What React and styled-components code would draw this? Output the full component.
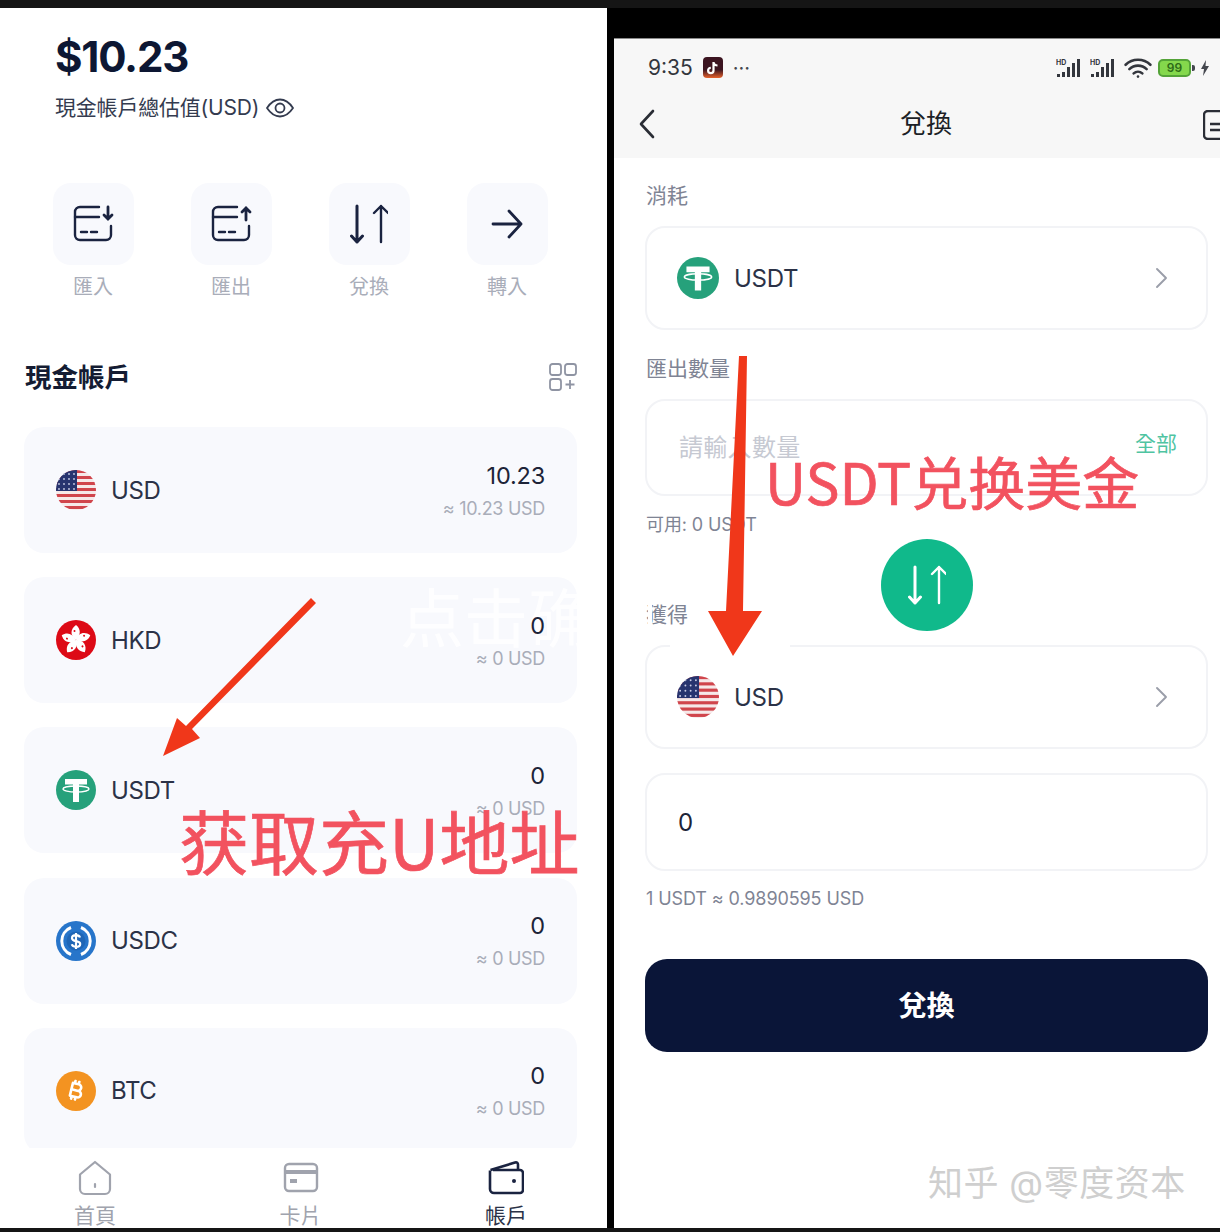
import React from 'react';
import styled, { createGlobalStyle } from 'styled-components';
import { FaBitcoinSign } from 'react-icons/fa6';

const FONT = `Inter, "Noto Sans CJK TC", "Noto Sans", sans-serif`;

const GlobalStyle = createGlobalStyle`
	html, body { margin: 0; padding: 0; background: #111; }
	* { box-sizing: border-box; }
	body { font-family: ${FONT}; }
`;

const Page = styled.div`
	position: relative;
	width: 1220px;
	height: 1232px;
	overflow: hidden;
	background: #000;
	border-top: 8px solid #151515;
	border-bottom: 4px solid #151515;
	display: grid;
	grid-template-columns: 607px 606px;
	column-gap: 7px;
`;

/* ---- left phone ---- */
const AccountPanel = styled.section`
	position: relative;
	background: #fff;
	overflow: hidden;
	display: flex;
	flex-direction: column;
	padding-top: 24px;
`;
const Balance = styled.div`
	padding-left: 55px;
	font-size: 42px;
	line-height: 50px;
	font-weight: 700;
	letter-spacing: -1.2px;
	color: #0d1733;
`;
const BalanceNote = styled.div`
	margin-top: 12px;
	padding-left: 55px;
	display: flex;
	align-items: center;
	gap: 7px;
	font-size: 21px;
	line-height: 28px;
	letter-spacing: -0.2px;
	color: #343b4f;
`;
const Actions = styled.div`
	margin-top: 61px;
	padding-left: 53px;
	display: grid;
	grid-template-columns: repeat(4, 80px);
	column-gap: 58px;
`;
const Action = styled.div`
	display: flex;
	flex-direction: column;
	align-items: center;
	gap: 8px;
`;
const ActionTile = styled.div`
	width: 81px;
	height: 82px;
	border-radius: 18px;
	background: #f8f9fd;
	display: flex;
	align-items: center;
	justify-content: center;
`;
const ActionLabel = styled.div`
	font-size: 20px;
	line-height: 28px;
	color: #a9adb9;
`;
const SectionHead = styled.div`
	margin-top: 61px;
	padding: 0 30px 0 25px;
	height: 30px;
	display: flex;
	align-items: center;
	justify-content: space-between;
`;
const SectionTitle = styled.h2`
	margin: 0;
	font-size: 26.5px;
	line-height: 30px;
	font-weight: 600;
	color: #141c33;
`;
const CardList = styled.div`
	flex: 1;
	min-height: 0;
	overflow: hidden;
	margin-top: 35px;
	padding: 0 30px 0 24px;
	display: flex;
	flex-direction: column;
	gap: 24.2px;
`;
const CurrencyCard = styled.div`
	flex: none;
	height: 126px;
	border-radius: 20px;
	background: #f8f9fd;
	padding: 0 32px;
	display: flex;
	align-items: center;
	justify-content: space-between;
`;
const CurrencyName = styled.div`
	display: flex;
	align-items: center;
	gap: 15px;
	font-size: 24px;
	letter-spacing: -0.4px;
	color: #2b3247;
`;
const CurrencyAmount = styled.div`
	display: flex;
	flex-direction: column;
	align-items: flex-end;
	gap: 5px;
	padding-top: 4px;
`;
const AmountMain = styled.div`
	position: relative;
	z-index: 1;
	font-size: 23.5px;
	line-height: 28px;
	letter-spacing: -0.2px;
	color: #1d2438;
`;
const AmountSub = styled.div`
	font-size: 18px;
	line-height: 28px;
	letter-spacing: -0.3px;
	color: #a9adb9;
`;
const BottomNav = styled.nav`
	flex: none;
	height: 80px;
	background: #fff;
	padding: 12px 60px 0 54px;
	display: grid;
	grid-template-columns: repeat(3, 82px);
	justify-content: space-between;
	overflow: hidden;
`;
const NavItem = styled.div`
	display: flex;
	flex-direction: column;
	align-items: center;
	gap: 6px;
	font-size: 21px;
	line-height: 28px;
	color: ${({ $active }) => ($active ? '#2b3247' : '#a0a3ad')};
`;

/* ---- right phone ---- */
const ExchangePanel = styled.section`
	position: relative;
	margin-top: 30px;
	background: #fff;
	overflow: hidden;
	display: flex;
	flex-direction: column;
	border-top: 1px solid #8a8a8a;
`;
const TopArea = styled.header`
	flex: none;
	background: #f7f7f7;
	height: 119px;
	display: flex;
	flex-direction: column;
`;
const StatusBar = styled.div`
	height: 57px;
	padding: 0 11px 0 34px;
	display: flex;
	align-items: center;
	justify-content: space-between;
`;
const StatusGroup = styled.div`
	display: flex;
	align-items: center;
	gap: ${({ $gap }) => $gap || 8}px;
`;
const Clock = styled.span`
	font-size: 21px;
	color: #33363d;
	margin-right: 2px;
`;
const AppBadge = styled.span`
	width: 20px;
	height: 21px;
	border-radius: 4px;
	background: linear-gradient(#3b1420 60%, #e8622c);
	color: #fff;
	display: flex;
	align-items: center;
	justify-content: center;
`;
const MoreDots = styled.span`
	font-size: 20px;
	line-height: 12px;
	margin-left: 2px;
	color: #44474e;
`;
const BatteryWrap = styled.span`
	display: flex;
	align-items: center;
	gap: 1px;
	&::after {
		content: '';
		width: 3px;
		height: 6px;
		border-radius: 0 2px 2px 0;
		background: #44474e;
	}
`;
const Battery = styled.span`
	width: 33px;
	height: 18px;
	border: 2px solid #54a338;
	border-radius: 5px;
	background: #84d84c;
	font-size: 12px;
	line-height: 14px;
	text-align: center;
	font-weight: 600;
	color: #2e6b17;
`;
const TitleBar = styled.div`
	height: 56px;
	padding-left: 24px;
	display: flex;
	align-items: center;
	position: relative;
`;
const PageTitle = styled.h1`
	position: absolute;
	left: 18px;
	right: 0;
	margin: 0;
	text-align: center;
	font-size: 26px;
	line-height: 36px;
	font-weight: 400;
	color: #1c1f26;
`;
const DocIcon = styled.svg`
	position: absolute;
	left: 589px;
	top: 14px;
`;
const FormBody = styled.div`
	position: relative;
	flex: 1;
	padding: 24px 12px 0 31px;
	display: flex;
	flex-direction: column;
`;
const FieldLabel = styled.div`
	padding-left: 1px;
	font-size: 21px;
	line-height: 28px;
	color: #7f8494;
	margin-top: ${({ $top }) => $top || 0}px;
`;
const FieldBox = styled.div`
	position: relative;
	margin-top: ${({ $top }) => ($top === undefined ? 16 : $top)}px;
	height: ${({ $h }) => $h}px;
	border: 2px solid #f2f3f6;
	border-radius: 20px;
	padding: 0 37px 0 30px;
	display: flex;
	align-items: center;
	justify-content: space-between;
`;
const BoxName = styled.div`
	display: flex;
	align-items: center;
	gap: 15px;
	font-size: 24px;
	letter-spacing: -0.3px;
	color: #2b3247;
`;
const Placeholder = styled.span`
	font-size: 24px;
	letter-spacing: 0.3px;
	color: #c6c9d2;
	margin: 0 0 4px 2px;
`;
const AllLink = styled.span`
	position: absolute;
	right: 29px;
	top: 29px;
	font-size: 21px;
	line-height: 28px;
	color: #4fc4a2;
`;
const Hint = styled.div`
	margin-top: ${({ $top }) => $top}px;
	padding-left: 1px;
	font-size: 18px;
	line-height: 28px;
	letter-spacing: -0.1px;
	color: #7f8494;
`;
const ZeroValue = styled.span`
	font-size: 24px;
	color: #1d2438;
	margin-left: 1px;
`;
const SwapButton = styled.div`
	position: absolute;
	left: 267px;
	top: 381px;
	width: 92px;
	height: 92px;
	border-radius: 50%;
	background: #10b98b;
	display: flex;
	align-items: center;
	justify-content: center;
`;
const SubmitButton = styled.button`
	margin-top: 46px;
	height: 93px;
	border: 0;
	border-radius: 22px;
	padding-bottom: 4px;
	background: #0a1538;
	color: #fff;
	font-family: ${FONT};
	font-size: 28px;
	font-weight: 600;
`;
const Watermark = styled.div`
	position: absolute;
	left: 928px;
	top: 1155px;
	white-space: nowrap;
	font-size: 35px;
	line-height: 40px;
	font-weight: 400;
	color: #cfcfcf;
	letter-spacing: 0.5px;
`;
const LabelPatch = styled.span`
	position: absolute;
	left: 34px;
	top: 444px;
	width: 4px;
	height: 28px;
	background: #fff;
`;
const BorderPatch = styled.span`
	position: absolute;
	left: 56px;
	top: 485px;
	width: 120px;
	height: 4px;
	background: #fff;
`;

/* ---- annotations on top of the screenshots ---- */
const RedNote = styled.div`
	position: absolute;
	left: ${({ $x }) => $x}px;
	top: ${({ $y }) => $y}px;
	font-size: ${({ $size }) => $size}px;
	font-weight: 400;
	-webkit-text-stroke: 0.7px #f2525f;
	line-height: 1.2;
	white-space: nowrap;
	color: #f2525f;
	font-family: "Noto Sans CJK SC", ${FONT};
`;
const GhostNote = styled.div`
	position: absolute;
	left: 400px;
	top: 564px;
	white-space: nowrap;
	font-size: 64px;
	line-height: 84px;
	color: rgba(255, 255, 255, 0.85);
	font-family: "Noto Sans CJK SC", ${FONT};
`;
const ArrowLayer = styled.svg`
	position: absolute;
	left: 0;
	top: -8px;
	pointer-events: none;
`;

/* ---- icons ---- */
const CardArrow = ({ up }) => (
	<svg width="42" height="40" viewBox="0 0 42 40" fill="none" stroke="#1a2340" strokeWidth="2.4" strokeLinecap="round">
		<path d="M27 3H8a5 5 0 0 0-5 5v23a5 5 0 0 0 5 5h26a5 5 0 0 0 5-5v-9" />
		<path d="M3 13h24" />
		<path d="M9 28h6M19 28h6" />
		{up ? <path d="M36 16V4M32 8l4-4 4 4" strokeWidth="2.8" /> : <path d="M36 3v12M32 11l4 4 4-4" strokeWidth="2.8" />}
	</svg>
);

const SwapArrows = ({ color, width = 38, height = 42 }) => (
	<svg width={width} height={height} viewBox="0 0 38 42" fill="none" stroke={color} strokeLinecap="round" strokeLinejoin="round">
		<path d="M7 3v36M1.5 33L7 39l5.5-6" strokeWidth="3" />
		<path d="M31 39V3M24 10l7-7 7 7" strokeWidth="2.4" />
	</svg>
);

const ArrowRight = () => (
	<svg width="34" height="34" viewBox="0 0 34 34" fill="none" stroke="#1a2340" strokeWidth="2.8" strokeLinecap="round" strokeLinejoin="round">
		<path d="M3 17h28M19 4l12 13-12 13" />
	</svg>
);

const AddGrid = () => (
	<svg width="28" height="28" viewBox="0 0 28 28" fill="none" stroke="#8f94a3" strokeWidth="1.8">
		<rect x="1" y="1" width="11" height="11" rx="2.5" />
		<rect x="16" y="1" width="11" height="11" rx="2.5" />
		<rect x="1" y="16" width="11" height="11" rx="2.5" />
		<path d="M21 17v9M16.5 21.5h9" />
	</svg>
);

const Eye = () => (
	<svg width="28" height="20" viewBox="0 0 28 20" fill="none" stroke="#343b4f" strokeWidth="1.8">
		<path d="M1 10C5 4 9 1.5 14 1.5S23 4 27 10c-4 6-8 8.500-13 8.500S5 16 1 10z" />
		<circle cx="14" cy="10" r="4.500" />
	</svg>
);

const UsFlag = ({ size = 40 }) => {
	const rows = [0, 1, 2, 3, 4, 5, 6];
	return (
		<svg width={size} height={size} viewBox="0 0 40 40">
			<defs>
				<clipPath id={`flag${size}`}>
					<circle cx="20" cy="20" r="20" />
				</clipPath>
			</defs>
			<g clipPath={`url(#flag${size})`}>
				<rect width="40" height="40" fill="#f6e9e9" />
				{rows.map(i => (
					<rect key={i} y={i * 6} width="40" height="3" fill="#d0454c" />
				))}
				<rect width="21" height="21" fill="#27346f" />
				{[4, 9, 14, 19].map(y =>
					[3, 8, 13, 18].map(x => <circle key={`${x}-${y}`} cx={x} cy={y} r="0.9" fill="#c9cde6" />)
				)}
			</g>
		</svg>
	);
};

const HkFlag = () => (
	<svg width="40" height="40" viewBox="0 0 40 40">
		<circle cx="20" cy="20" r="20" fill="#dd0a16" />
		{[0, 72, 144, 216, 288].map(a => (
			<path key={a} d="M20 20C14 16 14 9 20 5c5 4 5 10 0 15z" fill="#fff" transform={`rotate(${a} 20 20)`} />
		))}
		{[0, 72, 144, 216, 288].map(a => (
			<circle key={a} cx="18.500" cy="11" r="1" fill="#dd0a16" transform={`rotate(${a} 20 20)`} />
		))}
	</svg>
);

const Tether = ({ size = 40 }) => (
	<svg width={size} height={size} viewBox="0 0 40 40">
		<circle cx="20" cy="20" r="20" fill="#26a17b" />
		<path d="M9 9h22v5.500h-8V32h-6V14.500H9z" fill="#fff" />
		<ellipse cx="20" cy="19" rx="13" ry="3" fill="none" stroke="#fff" strokeWidth="1.400" />
	</svg>
);

const Usdc = () => (
	<svg width="40" height="40" viewBox="0 0 40 40">
		<circle cx="20" cy="20" r="20" fill="#2775ca" />
		<path d="M15 6.500a14.500 14.500 0 0 0 0 27M25 6.500a14.500 14.500 0 0 1 0 27" fill="none" stroke="#fff" strokeWidth="3" />
		<circle cx="20" cy="20" r="9.500" fill="#1f66b6" />
		<path d="M24 16.500c-.5-1.500-2-2.300-4-2.300-2.300 0-4 1.100-4 3 0 4 8.200 2 8.200 5.700 0 1.800-1.900 2.900-4.200 2.900-2 0-3.700-.8-4.200-2.500M20 12v16" fill="none" stroke="#fff" strokeWidth="2.200" />
	</svg>
);

const BtcBadge = styled.span`
	width: 40px;
	height: 40px;
	border-radius: 50%;
	background: #f39321;
	color: #fff;
	font-size: 21px;
	display: flex;
	align-items: center;
	justify-content: center;
	svg { transform: rotate(14deg); }
`;

const Chevron = () => (
	<svg width="14" height="22" viewBox="0 0 14 22" fill="none" stroke="#9a9ea9" strokeWidth="1.900" strokeLinecap="round" strokeLinejoin="round">
		<path d="M2 2l9 9-9 9" />
	</svg>
);

const HomeIcon = () => (
	<svg width="34" height="36" viewBox="0 0 34 36" fill="none" stroke="#a0a3ad" strokeWidth="2.200" strokeLinejoin="round">
		<path d="M2 14.500L17 2l15 12.500V29a5 5 0 0 1-5 5H7a5 5 0 0 1-5-5z" />
		<path d="M17 24v3" strokeLinecap="round" />
	</svg>
);

const CardIcon = () => (
	<svg width="36" height="36" viewBox="0 0 36 36" fill="none" stroke="#a0a3ad" strokeWidth="2.400">
		<rect x="2" y="4" width="32" height="27" rx="4" />
		<path d="M2 12h32" strokeWidth="4" />
		<rect x="7" y="19" width="7" height="4" fill="#a0a3ad" stroke="none" />
	</svg>
);

const WalletIcon = () => (
	<svg width="36" height="36" viewBox="0 0 36 36" fill="none" stroke="#1a2340" strokeWidth="2.600" strokeLinejoin="round">
		<path d="M2 10.500V29a4 4 0 0 0 4 4h26a3 3 0 0 0 3-3V13a3 3 0 0 0-3-3H5" />
		<path d="M2.500 10L27 2.500c2-.5 3 .5 3 2V10" />
		<circle cx="26" cy="21" r="2" fill="#1a2340" stroke="none" />
	</svg>
);

const Signal = () => (
	<svg width="28" height="20" viewBox="0 0 28 20" fill="#33363d">
		<text x="0" y="7" fontSize="7" fontWeight="700" fontFamily="Inter, sans-serif">HD</text>
		<rect x="1" y="16" width="3" height="3" />
		<rect x="6" y="14" width="3" height="5" />
		<rect x="11" y="9" width="3" height="10" />
		<rect x="16" y="5" width="3" height="14" />
		<rect x="21" y="1" width="3" height="18" />
	</svg>
);

const Wifi = () => (
	<svg width="28" height="22" viewBox="0 0 26 20" fill="none" stroke="#33363d" strokeWidth="2.400" strokeLinecap="round">
		<path d="M1.500 7a16.500 16.500 0 0 1 23 0M5 11a11.500 11.500 0 0 1 16 0M9 15a6 6 0 0 1 8 0" />
		<circle cx="13" cy="18" r="1.200" fill="#33363d" stroke="none" />
	</svg>
);

const Bolt = () => (
	<svg width="8" height="16" viewBox="0 0 8 16" fill="#44474e">
		<path d="M5 0L0 9h3l-1 7 6-10H4.500z" />
	</svg>
);

const TikTok = () => (
	<svg width="13" height="14" viewBox="0 0 13 14" fill="none" stroke="#fff" strokeWidth="2.200">
		<path d="M7.500 1v8.500a2.700 2.700 0 1 1-2.700-2.700M7.500 1.500c.5 2 2 3 4 3" />
	</svg>
);

const currencies = [
	{ code: 'USD', icon: <UsFlag />, amount: '10.23', usd: '10.23' },
	{ code: 'HKD', icon: <HkFlag />, amount: '0', usd: '0' },
	{ code: 'USDT', icon: <Tether />, amount: '0', usd: '0' },
	{ code: 'USDC', icon: <Usdc />, amount: '0', usd: '0' },
	{
		code: 'BTC',
		icon: (
			<BtcBadge>
				<FaBitcoinSign />
			</BtcBadge>
		),
		amount: '0',
		usd: '0'
	}
];

const actions = [
	{ label: '匯入', icon: <CardArrow /> },
	{ label: '匯出', icon: <CardArrow up /> },
	{ label: '兌換', icon: <SwapArrows color="#1a2340" /> },
	{ label: '轉入', icon: <ArrowRight /> }
];

export default function App() {
	return (
		<Page>
			<GlobalStyle />
			<AccountPanel>
				<Balance>$10.23</Balance>
				<BalanceNote>
					現金帳戶總估值(USD)
					<Eye />
				</BalanceNote>
				<Actions>
					{actions.map(a => (
						<Action key={a.label}>
							<ActionTile>{a.icon}</ActionTile>
							<ActionLabel>{a.label}</ActionLabel>
						</Action>
					))}
				</Actions>
				<SectionHead>
					<SectionTitle>現金帳戶</SectionTitle>
					<AddGrid />
				</SectionHead>
				<CardList>
					{currencies.map(c => (
						<CurrencyCard key={c.code}>
							<CurrencyName>
								{c.icon}
								{c.code}
							</CurrencyName>
							<CurrencyAmount>
								<AmountMain>{c.amount}</AmountMain>
								<AmountSub>≈ {c.usd} USD</AmountSub>
							</CurrencyAmount>
						</CurrencyCard>
					))}
				</CardList>
				<BottomNav>
					<NavItem>
						<HomeIcon />
						首頁
					</NavItem>
					<NavItem>
						<CardIcon />
						卡片
					</NavItem>
					<NavItem $active>
						<WalletIcon />
						帳戶
					</NavItem>
				</BottomNav>
			</AccountPanel>

			<ExchangePanel>
				<TopArea>
					<StatusBar>
						<StatusGroup>
							<Clock>9:35</Clock>
							<AppBadge>
								<TikTok />
							</AppBadge>
							<MoreDots>···</MoreDots>
						</StatusGroup>
						<StatusGroup $gap={6}>
							<Signal />
							<Signal />
							<Wifi />
							<BatteryWrap>
								<Battery>99</Battery>
							</BatteryWrap>
							<Bolt />
						</StatusGroup>
					</StatusBar>
					<TitleBar>
						<svg width="18" height="30" viewBox="0 0 18 30" fill="none" stroke="#2a2d35" strokeWidth="2.600" strokeLinecap="round" strokeLinejoin="round">
							<path d="M15 2L3 15l12 13" />
						</svg>
						<PageTitle>兌換</PageTitle>
						<DocIcon width="20" height="30" viewBox="0 0 20 30" fill="none" stroke="#2a2d35" strokeWidth="2.400">
							<path d="M20 1H5a4 4 0 0 0-4 4v20a4 4 0 0 0 4 4h15" />
							<path d="M7 14h13M7 20h13" />
						</DocIcon>
					</TitleBar>
				</TopArea>
				<FormBody>
					<FieldLabel>消耗</FieldLabel>
					<FieldBox $h={104}>
						<BoxName>
							<Tether size={42} />
							USDT
						</BoxName>
						<Chevron />
					</FieldBox>
					<FieldLabel $top={25}>匯出數量</FieldLabel>
					<FieldBox $h={97}>
						<Placeholder>請輸入數量</Placeholder>
						<AllLink>全部</AllLink>
					</FieldBox>
					<Hint $top={15}>可用: 0 USDT</Hint>
					<FieldLabel $top={62}>獲得</FieldLabel>
					<FieldBox $h={104}>
						<BoxName>
							<UsFlag size={42} />
							USD
						</BoxName>
						<Chevron />
					</FieldBox>
					<FieldBox $h={98} $top={24}>
						<ZeroValue>0</ZeroValue>
					</FieldBox>
					<Hint $top={14}>1 USDT ≈ 0.9890595 USD</Hint>
					<SubmitButton>兌換</SubmitButton>
					<SwapButton>
						<SwapArrows color="#fff" />
					</SwapButton>
					<LabelPatch />
					<BorderPatch />
				</FormBody>
			</ExchangePanel>

			<Watermark>知乎 @零度资本</Watermark>
			<GhostNote>点击确</GhostNote>
			<RedNote $x={179} $y={790} $size={70}>获取充U地址</RedNote>
			<RedNote $x={765} $y={438} $size={57}>USDT兑换美金</RedNote>

			<ArrowLayer width="1220" height="1232" viewBox="0 0 1220 1232">
				<path d="M311 598L316 603L192 729L200 738L163 756L177 718L186 726Z" fill="#f0371a" />
				<path d="M739 356H747L743 611H762L733 656L708 611H726Z" fill="#f0371a" />
			</ArrowLayer>
		</Page>
	);
}
